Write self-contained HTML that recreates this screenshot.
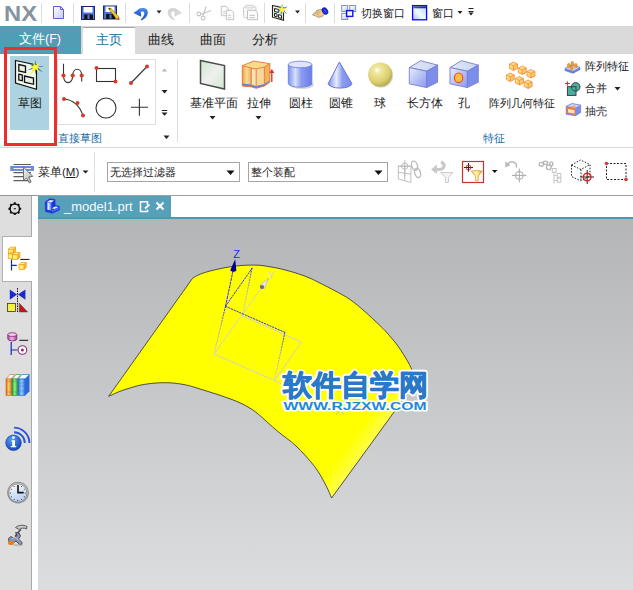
<!DOCTYPE html>
<html><head><meta charset="utf-8">
<style>
*{margin:0;padding:0;box-sizing:border-box}
html,body{width:633px;height:590px;overflow:hidden;background:#fff;font-family:"Liberation Sans",sans-serif;color:#222}
.a{position:absolute}
.t{position:absolute;white-space:nowrap;font-size:12px;line-height:12px}
svg{position:absolute;overflow:visible}
</style></head><body>
<!-- quick access bar -->
<div class="a" style="left:0;top:0;width:633px;height:26px;background:#fff"></div>
<div class="t" style="left:3.5px;top:3px;font-size:22px;line-height:22px;font-weight:bold;color:#8694a0;transform:scaleX(1.08);transform-origin:0 0">NX</div>
<div class="a" style="left:41px;top:3px;width:1px;height:20px;background:#dcdcdc"></div>
<div class="a" style="left:73px;top:3px;width:1px;height:20px;background:#dcdcdc"></div>
<div class="a" style="left:125px;top:3px;width:1px;height:20px;background:#dcdcdc"></div>
<div class="a" style="left:189px;top:3px;width:1px;height:20px;background:#dcdcdc"></div>
<div class="a" style="left:264px;top:3px;width:1px;height:20px;background:#dcdcdc"></div>
<div class="a" style="left:305px;top:3px;width:1px;height:20px;background:#dcdcdc"></div>
<div class="a" style="left:334px;top:3px;width:1px;height:20px;background:#dcdcdc"></div>


<!-- QA icons -->
<svg style="left:0;top:0" width="633" height="26">
 <defs>
  <linearGradient id="gdoc" x1="0" y1="0" x2="1" y2="1"><stop offset="0" stop-color="#ffffff"/><stop offset="1" stop-color="#c8c8f4"/></linearGradient>
  <linearGradient id="gsave" x1="0" y1="0" x2="1" y2="1"><stop offset="0" stop-color="#3a5ad0"/><stop offset="1" stop-color="#6d8ee8"/></linearGradient>
  <linearGradient id="gwin" x1="0" y1="0" x2="1" y2="1"><stop offset="0" stop-color="#ffffff"/><stop offset="0.5" stop-color="#e4ecfa"/><stop offset="1" stop-color="#a6bff0"/></linearGradient>
 </defs>
 <!-- new doc -->
 <path d="M53.5 6.5 H60.5 L63.5 9.5 V18.5 H53.5 Z" fill="url(#gdoc)" stroke="#5b5bdc" stroke-width="1"/>
 <path d="M60.5 6.5 V9.5 H63.5" fill="none" stroke="#5b5bdc" stroke-width="1"/>
 <!-- save -->
 <rect x="81.5" y="6.5" width="13" height="13" fill="url(#gsave)" stroke="#1a2570" stroke-width="1"/>
 <rect x="83.5" y="7" width="9" height="5.5" fill="#fff"/>
 <rect x="84.2" y="14.5" width="8.8" height="5" fill="#111"/>
 <rect x="87.5" y="15" width="2" height="4" fill="#5a7ae0"/>
 <!-- save as -->
 <rect x="103.5" y="6" width="13" height="13" fill="url(#gsave)" stroke="#1a2570" stroke-width="1"/>
 <rect x="105.5" y="6.5" width="9" height="5.5" fill="#fff"/>
 <rect x="106.2" y="14" width="8.8" height="5" fill="#111"/>
 <rect x="109.5" y="14.5" width="2" height="4" fill="#5a7ae0"/>
 <path d="M108.5 8.5 L110.5 8 L119 17 L117 19.5 Z" fill="#f4d020" stroke="#8a6a10" stroke-width="0.6"/>
 <path d="M117 19.5 L119 17 L119.5 20 Z" fill="#e02020"/>
 <path d="M108.5 8.5 L110.5 8 L110 10 Z" fill="#222"/>
 <!-- undo -->
 <defs><linearGradient id="gund" x1="0" y1="0" x2="0" y2="1"><stop offset="0" stop-color="#4a8af0"/><stop offset="1" stop-color="#1a50c8"/></linearGradient></defs>
 <path d="M133.5 13 L140.5 7.8 L141.2 16.8 Z" fill="url(#gund)"/>
 <path d="M139 9.2 C144 6.5 148.5 9 147.8 13.5 C147.2 16.8 144.5 19 141.2 20.5 L140.8 19.6 C143.3 17 144.8 14.5 144.2 12.8 C143.5 11 141.5 11.2 139.8 12.5 Z" fill="url(#gund)"/>
 <path d="M156.5 10.5 H161.5 L159 13.5 Z" fill="#222"/>
 <!-- redo gray -->
 <g transform="translate(315.5,0) scale(-1,1)">
 <path d="M133.5 13 L140.5 7.8 L141.2 16.8 Z" fill="#d6d6d6"/>
 <path d="M139 9.2 C144 6.5 148.5 9 147.8 13.5 C147.2 16.8 144.5 19 141.2 20.5 L140.8 19.6 C143.3 17 144.8 14.5 144.2 12.8 C143.5 11 141.5 11.2 139.8 12.5 Z" fill="#d6d6d6"/>
 </g>
 <!-- cut gray -->
 <g stroke="#c4c4c4" fill="none" stroke-width="1.1">
  <path d="M206.2 6.5 L203 15.5 M211 10.5 L201 14.2"/>
  <circle cx="198.8" cy="14" r="1.9"/><circle cx="203.2" cy="18" r="1.9"/>
 </g>
 <!-- copy gray -->
 <g stroke="#c4c4c4" fill="#fbfbfb" stroke-width="1">
  <path d="M221.3 6.3 H226 L228.3 8.6 V15.7 H221.3 Z"/>
  <path d="M226.3 10.3 H231.5 L233.7 12.5 V19.7 H226.3 Z"/>
  <path d="M223 11.4 H225.5 M223 13.3 H225.5 M227.8 15.4 H231 M227.8 17.6 H231" stroke-width="0.8"/>
 </g>
 <!-- paste gray -->
 <g stroke="#cccccc" fill="#f8f8f8" stroke-width="1">
  <rect x="243.5" y="6.8" width="12.5" height="10.8" rx="1"/>
  <rect x="245.5" y="5.3" width="8" height="2.6" rx="1.2"/>
 </g>
 <g stroke="#c0c0c0" fill="#fbfbfb" stroke-width="1">
  <path d="M247.5 10.3 H255 L257.6 12.8 V19.7 H247.5 Z"/>
  <path d="M249.5 15.4 H255 M249.5 17.6 H255" stroke-width="0.9"/>
 </g>
 <!-- sketch w star -->
 <path d="M272.5 5.5 L283.5 8 L283.5 20.3 L272.5 17.2 Z" fill="#eef6e8" stroke="#222" stroke-width="1.1"/>
 <path d="M274.5 8.5 L278.5 9.5 L278.5 12.5 L274.5 11.5 Z M274.5 13.2 L277 14 L277 17 L274.5 16.2 Z M278.5 14.5 L281.5 15.5 L281.5 18.5 L278.5 17.5 Z" fill="none" stroke="#222" stroke-width="1"/>
 <g transform="translate(282,9.5)">
  <path d="M0 -6 L1 -1.8 L5.5 -3 L2 0.5 L5 4.5 L0.5 2 L-1 6.5 L-1.5 2 L-5.5 2.5 L-2 -0.5 L-4.5 -4.5 L-0.8 -2 Z" fill="#4a88c8"/>
  <path d="M0 -4.5 L1.2 -1.2 L4.5 -1.5 L1.8 0.8 L3 4 L0 2 L-2.8 3.5 L-1.8 0.5 L-4.5 -1.5 L-1.2 -1.2 Z" fill="#fff43a"/>
 </g>
 <path d="M295 10.5 H300 L297.5 13.5 Z" fill="#222"/>
 <!-- hand -->
 <path d="M312.5 14.8 C313 13.5 314.5 12.8 316 12.3 L316.5 10.5 C318 9.8 320.5 9.5 322.5 9.2 L324.5 11.5 C324.8 13.5 324 15.5 322 16.5 C320 17.3 318 17.5 316.5 16.8 L315.5 15.8 C314.5 15.6 313.3 15.5 312.5 14.8 Z" fill="#ecc98c" stroke="#8a7050" stroke-width="0.6"/>
 <path d="M316.5 12.5 L319.5 12 M316.5 14.5 L319 14" stroke="#a08060" stroke-width="0.5"/>
 <ellipse cx="325" cy="11" rx="2.6" ry="3.6" transform="rotate(-35 325 11)" fill="#1828d8" stroke="#0a10a0" stroke-width="0.6"/>
 <path d="M324.3 9.5 L326.3 12.5" stroke="#7080ff" stroke-width="0.8"/>
 <!-- switch window -->
 <g fill="url(#gwin)" stroke="#8a92a8" stroke-width="1">
  <rect x="341.7" y="5.5" width="6" height="6"/>
  <rect x="349.7" y="5.5" width="6" height="6"/>
  <rect x="341.7" y="13.5" width="6" height="6"/>
 </g>
 <rect x="346.6" y="10.6" width="6.2" height="5.8" fill="#f4f8ff" stroke="#0a14f0" stroke-width="1.4"/>
 <!-- window -->
 <linearGradient id="gwin2" x1="0" y1="1" x2="1" y2="0"><stop offset="0" stop-color="#b0c0f4"/><stop offset="0.45" stop-color="#f0fbff"/><stop offset="1" stop-color="#b8d0f0"/></linearGradient>
 <linearGradient id="gwbar" x1="0" y1="0" x2="1" y2="0"><stop offset="0" stop-color="#3a5ac8"/><stop offset="1" stop-color="#1a3060"/></linearGradient>
 <rect x="412.6" y="5.6" width="14" height="14.2" fill="url(#gwin2)" stroke="#0808ff" stroke-width="1.3"/>
 <rect x="413.3" y="6.3" width="12.6" height="2" fill="url(#gwbar)"/>
 <path d="M457.5 11 H462.5 L460 14 Z" fill="#222"/>
 <path d="M468.5 8.5 H473.5 M468.5 11.5 H473.5" stroke="#222" stroke-width="1"/>
 <path d="M468.5 12.5 H473.5 L471 15.5 Z" fill="#222"/>
</svg>
<div class="t" style="left:361px;top:7px;font-size:11px;line-height:12px">切换窗口</div>
<div class="t" style="left:432px;top:7px;font-size:11px;line-height:12px">窗口</div>

<!-- tab row -->
<div class="a" style="left:0;top:26px;width:633px;height:28px;background:#dadada"></div>
<div class="a" style="left:0;top:26px;width:81px;height:28px;background:#519db6"></div>
<div class="a" style="left:83px;top:27px;width:52px;height:27px;background:#fff;border-top:1px solid #a4a4a4"></div>
<div class="t" style="left:19px;top:33px;font-size:12.5px;line-height:13px;color:#fff">文件(F)</div>
<div class="t" style="left:96px;top:33px;font-size:13px;line-height:13px;color:#156e96">主页</div>
<div class="t" style="left:148px;top:33px;font-size:13px;line-height:13px;color:#222">曲线</div>
<div class="t" style="left:200px;top:33px;font-size:13px;line-height:13px;color:#222">曲面</div>
<div class="t" style="left:252px;top:33px;font-size:13px;line-height:13px;color:#222">分析</div>

<!-- ribbon -->
<div class="a" style="left:0;top:147px;width:633px;height:1px;background:#d8d8d8"></div>
<div class="a" style="left:10px;top:56px;width:39px;height:74px;background:#aed3e0"></div>
<div class="a" style="left:4px;top:47px;width:53px;height:99px;border:3px solid #ee2e2e"></div>
<div class="t" style="left:18px;top:98px;font-size:11.5px;line-height:11px">草图</div>
<div class="a" style="left:57px;top:59px;width:99px;height:66px;border:1px solid #dddddd"></div>
<div class="t" style="left:58px;top:133px;font-size:11px;line-height:11px;color:#1a6ea8">直接草图</div>
<div class="a" style="left:177px;top:59px;width:1px;height:83px;background:#dcdcdc"></div>
<div class="t" style="left:190px;top:98px;font-size:11.5px;line-height:11px">基准平面</div>
<div class="t" style="left:247px;top:98px;font-size:11.5px;line-height:11px">拉伸</div>
<div class="t" style="left:289px;top:98px;font-size:11.5px;line-height:11px">圆柱</div>
<div class="t" style="left:329px;top:98px;font-size:11.5px;line-height:11px">圆锥</div>
<div class="t" style="left:374px;top:98px;font-size:11.5px;line-height:11px">球</div>
<div class="t" style="left:407px;top:98px;font-size:11.5px;line-height:11px">长方体</div>
<div class="t" style="left:458px;top:98px;font-size:11.5px;line-height:11px">孔</div>
<div class="t" style="left:489px;top:98px;font-size:11px;line-height:11px">阵列几何特征</div>
<div class="t" style="left:483px;top:133px;font-size:11px;line-height:11px;color:#1a6ea8">特征</div>
<div class="t" style="left:585px;top:61px;font-size:11px;line-height:11px">阵列特征</div>
<div class="t" style="left:585px;top:83px;font-size:11px;line-height:11px">合并</div>
<div class="t" style="left:585px;top:106px;font-size:11px;line-height:11px">抽壳</div>


<!-- ribbon icons -->
<svg style="left:0;top:0" width="633" height="150">
 <defs>
  <linearGradient id="gdp" x1="0" y1="0" x2="1" y2="1"><stop offset="0" stop-color="#cfe6cf"/><stop offset="0.5" stop-color="#f0f0f0"/><stop offset="1" stop-color="#cfe8cf"/></linearGradient>
  <linearGradient id="gcyl" x1="0" y1="0" x2="1" y2="0"><stop offset="0" stop-color="#7a90f0"/><stop offset="0.3" stop-color="#d8e2fa"/><stop offset="0.55" stop-color="#8a9cf0"/><stop offset="1" stop-color="#6a7ce8"/></linearGradient>
  <linearGradient id="gcone" x1="0" y1="0" x2="1" y2="0"><stop offset="0" stop-color="#7a90f0"/><stop offset="0.35" stop-color="#e8ecfa"/><stop offset="0.6" stop-color="#8a9cf0"/><stop offset="1" stop-color="#7a8ce8"/></linearGradient>
  <radialGradient id="gsph" cx="0.38" cy="0.32" r="0.7"><stop offset="0" stop-color="#ffffff"/><stop offset="0.2" stop-color="#f0e8a0"/><stop offset="0.7" stop-color="#dccf70"/><stop offset="1" stop-color="#b8a850"/></radialGradient>
  <linearGradient id="gbf" x1="0" y1="0" x2="1" y2="1"><stop offset="0" stop-color="#e8eefa"/><stop offset="1" stop-color="#8898ee"/></linearGradient>
  <linearGradient id="gbt" x1="0" y1="0" x2="1" y2="0"><stop offset="0" stop-color="#e0e8f4"/><stop offset="1" stop-color="#c8d8f0"/></linearGradient>
  <linearGradient id="gext" x1="0" y1="0" x2="1" y2="0"><stop offset="0" stop-color="#f0a030"/><stop offset="0.5" stop-color="#f6dca0"/><stop offset="1" stop-color="#f0b050"/></linearGradient>
  <linearGradient id="gcube" x1="0" y1="0" x2="1" y2="1"><stop offset="0" stop-color="#fff0a0"/><stop offset="1" stop-color="#f8b848"/></linearGradient>
  <g id="cb"><path d="M-4 -2 L0 -4 L4 -2 L4 2.5 L0 4.5 L-4 2.5 Z" fill="url(#gcube)"/><path d="M-4 -2 L0 0 L4 -2 M0 0 V4.5" fill="none"/></g>
 </defs>
 <!-- sketch -->
 <path d="M15.5 60.5 L36.5 65 L36.5 89.3 L15.5 83 Z" fill="#f2f8ee" stroke="#111" stroke-width="1.2"/>
 <path d="M18.8 64.5 L25.5 66 L25.5 72.5 L18.8 71 Z" fill="#e8f0e4" stroke="#111" stroke-width="1.3"/>
 <path d="M18.8 74.2 L22.3 75 L22.3 80.8 L18.8 80 Z" fill="#e8f0e4" stroke="#111" stroke-width="1.3"/>
 <path d="M24.5 76 L33.5 78 L33.5 84.3 L24.5 82.2 Z" fill="#e8f0e4" stroke="#111" stroke-width="1.3"/>
 <g>
  <path d="M36.50 67.19 L35.35 59.80 L34.30 67.21 Z" fill="#2a70a8"/>
  <path d="M35.50 68.30 L44.00 66.40 L35.30 66.10 Z" fill="#2a70a8"/>
  <path d="M34.77 68.10 L43.20 72.60 L36.03 66.30 Z" fill="#2a70a8"/>
  <path d="M34.30 67.26 L35.80 74.60 L36.50 67.14 Z" fill="#2a70a8"/>
  <path d="M35.01 66.17 L27.00 70.40 L35.79 68.23 Z" fill="#2a70a8"/>
  <path d="M35.98 66.27 L29.00 63.20 L34.82 68.13 Z" fill="#2a70a8"/>
  <path d="M34.13 66.40 L30.00 75.80 L36.67 68.00 Z" fill="#fff020"/>
  <path d="M36.50 68.21 L39.90 62.30 L34.30 66.19 Z" fill="#fff020"/>
  <path d="M35.65 65.72 L29.50 66.20 L35.15 68.68 Z" fill="#fff020"/>
  <path d="M35.40 68.70 L41.60 67.20 L35.40 65.70 Z" fill="#fff020"/>
  <path d="M36.76 66.57 L33.00 62.00 L34.04 67.83 Z" fill="#fff020"/>
  <path d="M34.21 68.12 L39.50 72.50 L36.59 66.28 Z" fill="#fff020"/>
  <path d="M34.59 65.93 L31.00 70.00 L36.21 68.47 Z" fill="#fff020"/>
  <circle cx="35.4" cy="67.2" r="2.2" fill="#fff43a"/>
 </g>
 <!-- gallery icons -->
 <g fill="none" stroke="#333" stroke-width="1.1">
  <path d="M63.5 63.8 V75.6 C63.5 84.9 72.7 84.9 72.7 75.6 C72.7 67.2 81.7 67.2 81.7 75.6 V81.6"/>
  <rect x="96.5" y="68.5" width="19" height="13"/>
  <path d="M131 83 L147 66.5"/>
  <path d="M64 99 C72 99.5 80 105 83 116"/>
  <circle cx="106" cy="108" r="10"/>
  <path d="M131 107.3 H148 M139.4 98.7 V115.8"/>
 </g>
 <g fill="#d83a2a">
  <circle cx="63.5" cy="75.6" r="2.1"/><circle cx="72.7" cy="75.6" r="2.1"/><circle cx="81.7" cy="75.6" r="2.1"/>
  <circle cx="96.5" cy="68" r="2"/><circle cx="115.5" cy="81.5" r="2"/>
  <circle cx="131" cy="83" r="2"/><circle cx="147" cy="66.5" r="2"/>
  <circle cx="64" cy="99" r="2"/><circle cx="77.5" cy="103" r="2"/><circle cx="83" cy="115.5" r="2"/>
 </g>
 <path d="M161.8 71.5 H167.2 L164.5 68.5 Z" fill="#b4b4b4"/>
 <path d="M161.5 90 H167.5 L164.5 93.5 Z" fill="#222"/>
 <path d="M161.8 110.5 H167.2" stroke="#222" stroke-width="1"/><path d="M161.5 112.5 H167.5 L164.5 115.8 Z" fill="#222"/>
 <path d="M163.5 135.5 H169.5 L166.5 139 Z" fill="#222"/>
 <!-- datum plane -->
 <path d="M200.5 60.5 L224.5 65.5 L224.5 89 L200.5 83.5 Z" fill="url(#gdp)" stroke="#4a4a4a" stroke-width="1.5"/>
 <path d="M209.5 116 H215.5 L212.5 119.5 Z" fill="#222"/>
 <!-- extrude -->
 <path d="M264.4 67 L269.9 63.6 L269.9 82 L264.4 86 Z" fill="#f2b458"/>
 <path d="M256.2 69 L264.4 67 L264.4 86 L256.2 88 Z" fill="#f6d69a"/>
 <path d="M251.2 68 L256.2 69 L256.2 88 L251.2 86.5 Z" fill="#f8e4b0"/>
 <path d="M242.3 65.7 L251.2 68 L251.2 86.5 L242.3 86 Z" fill="url(#gext)"/>
 <path d="M242.3 65.7 L253.7 61.1 L269.9 63.6 L264.4 67 L256.2 69 L251.2 68 Z" fill="#f8dc88"/>
 <path d="M242.3 83.5 L251.2 84.5 L256.2 86 L264.4 84 L269.9 80.5 L269.9 82 L264.4 86 L256.2 88.3 L251.2 86.8 L242.3 86 Z" fill="#5a86e0"/>
 <path d="M242.3 65.7 L253.7 61.1 L269.9 63.6 V82 L264.4 86 L256.2 88.3 L251.2 86.8 L242.3 86 Z M242.3 65.7 L251.2 68 L256.2 69 L264.4 67 L269.9 63.6 M251.2 68 V86.8 M256.2 69 V88.3 M264.4 67 V86" fill="none" stroke="#e8703a" stroke-width="0.9"/>
 <path d="M271.8 82 V72" stroke="#d83030" stroke-width="1.3"/>
 <path d="M269.3 73 L271.8 69 L274.3 73 Z" fill="#d83030"/>
 <path d="M255.5 116 H261.5 L258.5 119.5 Z" fill="#222"/>
 <!-- cylinder -->
 <ellipse cx="302" cy="85" rx="12" ry="4" fill="#c8c8c8" opacity="0.7"/>
 <path d="M288.3 64.5 V83.5 A11.8 3.7 0 0 0 311.9 83.5 V64.5 Z" fill="url(#gcyl)" stroke="#6a7ad8" stroke-width="0.8"/>
 <ellipse cx="300.1" cy="64.5" rx="11.8" ry="3.3" fill="#dfe6fb" stroke="#6a7ad8" stroke-width="0.8"/>
 <!-- cone -->
 <path d="M339.4 62 L328.2 83.5 A11.8 4.6 0 0 0 351.8 83.5 Z" fill="url(#gcone)" stroke="#5a6ad8" stroke-width="0.9"/>
 <!-- sphere -->
 <circle cx="381" cy="75.5" r="12.2" fill="#c8c8c8" opacity="0.6"/>
 <circle cx="380.2" cy="74.6" r="12.1" fill="url(#gsph)"/>
 <!-- box -->
 <path d="M409.3 67.6 L420.7 60.7 L437.6 65.1 L426.7 71.2 Z" fill="url(#gbt)" stroke="#7a7ad0" stroke-width="0.9"/>
 <path d="M409.3 67.6 L426.7 71.2 L426.7 87.6 L409.3 83.8 Z" fill="url(#gbf)" stroke="#7a7ad0" stroke-width="0.9"/>
 <path d="M426.7 71.2 L437.6 65.1 L437.6 82.2 L426.7 87.6 Z" fill="#7c8eec" stroke="#7a7ad0" stroke-width="0.9"/>
 <!-- hole -->
 <path d="M450 67.6 L461.4 60.7 L478.3 65.1 L467.4 71.2 Z" fill="url(#gbt)" stroke="#7a7ad0" stroke-width="0.9"/>
 <path d="M450 67.6 L467.4 71.2 L467.4 87.6 L450 83.8 Z" fill="url(#gbf)" stroke="#7a7ad0" stroke-width="0.9"/>
 <path d="M467.4 71.2 L478.3 65.1 L478.3 82.2 L467.4 87.6 Z" fill="#7c8eec" stroke="#7a7ad0" stroke-width="0.9"/>
 <ellipse cx="458.6" cy="77.8" rx="4.2" ry="4.8" fill="#f8c040" stroke="#e84a20" stroke-width="1.1"/>
 <!-- pattern geometry -->
 <g stroke="#f08030" stroke-width="0.7">
  <use href="#cb" x="513.5" y="66"/><use href="#cb" x="522.3" y="70"/><use href="#cb" x="531" y="73.5"/>
  <use href="#cb" x="510.3" y="77"/><use href="#cb" x="519.4" y="80.5"/><use href="#cb" x="528.1" y="84"/>
 </g>
 <!-- small icons -->
 <path d="M565 68.5 L572 64.5 L580 67.5 L580 69.5 L573 73.3 L565 70.5 Z" fill="#6a80e0" stroke="#5060c0" stroke-width="0.6"/>
 <path d="M565 68.5 L572 64.5 L580 67.5 L573 71.3 Z" fill="#c8d4f8" stroke="#7080d0" stroke-width="0.5"/>
 <g fill="#f0a030" stroke="#c06a10" stroke-width="0.4">
  <rect x="567.5" y="63.5" width="2.6" height="4.2" rx="1.2"/><rect x="571" y="61.5" width="2.6" height="4.2" rx="1.2"/>
  <rect x="574.5" y="63.5" width="2.6" height="4.2" rx="1.2"/><rect x="570.5" y="65.8" width="2.6" height="4.2" rx="1.2"/>
 </g>
 <circle cx="575.7" cy="86.9" r="4.3" fill="#48b0a0" stroke="#333" stroke-width="0.9"/>
 <rect x="567.4" y="86.7" width="8.6" height="8.7" fill="#48b0a0" stroke="#333" stroke-width="0.9"/>
 <path d="M575.7 91.2 A4.3 4.3 0 0 1 571.4 86.9" fill="none" stroke="#333" stroke-width="0.8"/>
 <path d="M565 83.5 H569.8 M567.4 81.3 V85.7" stroke="#e02020" stroke-width="1"/>
 <path d="M614.5 87 H620.5 L617.5 90.5 Z" fill="#222"/>
 <path d="M566.2 106.2 L572 103.5 L580.6 105 L580.6 112.5 L575.5 115.8 L566.2 114.3 Z" fill="#7a8cf0" stroke="#5a6ac8" stroke-width="0.6"/>
 <path d="M566.8 106.8 L575.3 108 L575.3 115 L566.8 113.6 Z" fill="#f07a30"/>
 <path d="M568 109 L574.5 110 L574.5 113.5 L568 112.5 Z" fill="#fce0b8"/>
 <path d="M567 106.3 L572 104 L580 105.3 L575.3 107.8 Z" fill="#c8d4f8"/>
 <path d="M570 107 L574 105.5 L576 106 L575 108 Z" fill="#f8a860"/>
</svg>

<!-- toolbar -->
<div class="a" style="left:0;top:195px;width:633px;height:1px;background:#9aa0a4"></div>
<div class="a" style="left:94px;top:152px;width:1px;height:40px;background:#e0e0e0"></div>
<div class="t" style="left:38px;top:167px;font-size:11.5px;line-height:11px">菜单(<u>M</u>)</div>
<div class="a" style="left:107px;top:162px;width:133px;height:20px;border:1px solid #a5a5a5;background:#fff"></div>
<div class="t" style="left:110px;top:167px;font-size:11px;line-height:11px">无选择过滤器</div>
<div class="a" style="left:248px;top:162px;width:140px;height:20px;border:1px solid #a5a5a5;background:#fff"></div>
<div class="t" style="left:251px;top:167px;font-size:11px;line-height:11px">整个装配</div>


<!-- toolbar icons -->
<svg style="left:0;top:150px" width="633" height="45" viewBox="0 150 633 45">
 <defs>
  <linearGradient id="gfun" x1="0" y1="0" x2="1" y2="0"><stop offset="0" stop-color="#f8d870"/><stop offset="0.5" stop-color="#fff0b0"/><stop offset="1" stop-color="#e0a830"/></linearGradient>
 </defs>
 <!-- menu -->
 <path d="M13.5 164.5 H31 M13.5 172.6 H31 M13.5 176.6 H31 M13.5 180.6 H31" stroke="#5e5e5e" stroke-width="1.1"/>
 <rect x="10.2" y="166" width="23.8" height="4.9" fill="#6a8ae0"/>
 <path d="M13.5 168.5 H31" stroke="#f0f4ff" stroke-width="1"/>
 <defs><linearGradient id="gcur" x1="0" y1="0" x2="1" y2="1"><stop offset="0" stop-color="#f4f4f4"/><stop offset="1" stop-color="#b0b0b0"/></linearGradient></defs>
 <path d="M23.5 167.2 L23.5 180.5 L26.5 178 L29.3 183 L31.2 182 L28.6 177 L32.8 176.3 Z" fill="url(#gcur)" stroke="#666" stroke-width="0.9" stroke-linejoin="round"/>
 <path d="M82.5 170.5 H88.5 L85.5 173.5 Z" fill="#222"/>
 <path d="M226.5 170.5 H234.5 L230.5 175 Z" fill="#111"/>
 <path d="M374.5 170.5 H382.5 L378.5 175 Z" fill="#111"/>
 <!-- icon1 gray -->
 <g stroke="#b8b8b8" fill="none" stroke-width="0.9">
  <path d="M398.3 166.2 H410.9 V182.5 L398.3 179 Z M398.3 172.4 L410.9 174 M404.8 166.2 V180.8"/>
  <path d="M404.8 160.2 V176.5 M398 166.2 H410.5"/>
  <circle cx="404.8" cy="166.2" r="3.1"/>
  <ellipse cx="414.6" cy="165.8" rx="2.9" ry="4.8" transform="rotate(-18 414.6 165.8)" stroke-width="1.3"/>
  <ellipse cx="417.6" cy="172.9" rx="2.9" ry="4.8" transform="rotate(-18 417.6 172.9)" stroke-width="1.3"/>
 </g>
 <!-- icon2 gray -->
 <path d="M441 162 C446 164 445 170 438 169.5 L436 169.5" fill="none" stroke="#c8c8c8" stroke-width="3"/>
 <path d="M431 169.5 L437 164.5 L437 174 Z" fill="#c8c8c8"/>
 <path d="M440.5 172.5 H453 L448.5 177.5 V182.5 H445.5 V177.5 Z" fill="#f2f2f2" stroke="#c8c8c8" stroke-width="0.9"/>
 <!-- icon3 -->
 <rect x="462.5" y="161.5" width="21" height="21" fill="#fff" stroke="#d03030" stroke-width="1.2"/>
 <path d="M468.5 163 V171.8 M464 167.5 H473" stroke="#222" stroke-width="1.1"/>
 <circle cx="468.5" cy="167.5" r="2.5" fill="none" stroke="#d02828" stroke-width="0.9"/>
 <path d="M471.2 171.2 Q476.7 169.5 482.2 171.2 L478.3 176 V180.6 Q476.8 181.2 475.3 180.6 V176 Z" fill="url(#gfun)" stroke="#d09a20" stroke-width="0.7"/>
 <path d="M492 170 H497.5 L494.7 173 Z" fill="#111"/>
 <!-- icon4 gray -->
 <path d="M507 165 C510 160 517 161 516.5 167.5" fill="none" stroke="#b8b8b8" stroke-width="1.5"/>
 <path d="M505 161.5 L505.5 167.5 L510.5 165 Z" fill="#b8b8b8"/>
 <g stroke="#a8a8a8" stroke-width="1" fill="none"><circle cx="519.3" cy="175.4" r="4"/><path d="M512 175.4 H526.5 M519.3 168.5 V182.5"/></g>
 <!-- icon5 gray -->
 <g stroke="#b4b4b4" fill="none" stroke-width="1.3">
  <ellipse cx="541.3" cy="164.3" rx="2.1" ry="1.9"/><ellipse cx="545.5" cy="162.8" rx="2.2" ry="1.6"/>
  <circle cx="548.8" cy="167.3" r="2.4"/><ellipse cx="551.3" cy="163.8" rx="1.6" ry="2"/>
 </g>
 <g stroke="#c4c4c4" fill="none" stroke-width="1">
  <rect x="552.3" y="168.5" width="3.8" height="3.8"/><rect x="557.3" y="173.5" width="3.5" height="3.8"/><rect x="557.3" y="178" width="3.5" height="4.2"/>
  <path d="M554 172.5 V183.6 M554 175.3 H557 M554 180.5 H557"/>
 </g>
 <!-- icon6 dotted cube -->
 <g stroke="#222" fill="none" stroke-width="1" stroke-dasharray="1.5 1.5">
  <path d="M571.5 165 L580.5 160 L590 164.5 L590 176 L581 181 L571.5 176.5 Z M571.5 165 L581 169.5 L590 164.5 M581 169.5 V181"/>
 </g>
 <g stroke="#222" stroke-width="1"><path d="M580 177 H594 M587.2 170 V184"/></g>
 <circle cx="587.2" cy="177" r="3.8" fill="none" stroke="#d82020" stroke-width="1.4"/>
 <!-- icon7 dashed rect -->
 <rect x="606.5" y="163.5" width="19.5" height="16" fill="none" stroke="#222" stroke-width="1" stroke-dasharray="2 1.5"/>
 <circle cx="606.5" cy="163.5" r="1.8" fill="#d83a3a"/><circle cx="626" cy="179.5" r="1.8" fill="#d83a3a"/>
</svg>

<!-- doc tab row -->
<div class="a" style="left:38px;top:196px;width:133px;height:23px;background:#57a0b9"></div>
<div class="a" style="left:38px;top:217px;width:595px;height:2px;background:#4b9ab5"></div>
<div class="t" style="left:64px;top:199.5px;font-size:13px;line-height:13px;color:#f4faff">_model1.prt</div>
<svg style="left:0;top:196px" width="200" height="23" viewBox="0 196 200 23">
 <defs><linearGradient id="gL" x1="0" y1="0" x2="1" y2="0"><stop offset="0" stop-color="#3050f0"/><stop offset="0.35" stop-color="#e8eeff"/><stop offset="1" stop-color="#5070f0"/></linearGradient></defs>
 <path d="M45.2 202 L49.8 198.8 L55 199.6 L55.2 205.6 L59.3 206.2 L59.3 210 L52.5 213.2 L45.5 211.5 Z" fill="#1838e0" stroke="#1a30d0" stroke-width="0.6" stroke-linejoin="round"/>
 <path d="M46.6 202.6 L51.4 203 L51.4 210.5 L46.6 209.8 Z" fill="url(#gL)"/>
 <path d="M46.6 202.3 L50 200 L54 200.6 L51.4 202.5 Z" fill="#dfe6ff"/>
 <path d="M51.6 208.2 L55.2 206.4 L58.6 206.9 L54.8 208.9 Z" fill="#e8eeff"/>
 <path d="M51.8 210 L58.5 207.6 L58.5 209.6 L52 212 Z" fill="#4a68f0"/>
 <path d="M147.5 205 V201.8 H140.5 V211.5 H147.5 V209.5" fill="none" stroke="#fff" stroke-width="1.5"/>
 <path d="M145 208.5 L149.5 204.5" stroke="#fff" stroke-width="1.8"/>
 <path d="M156.5 202.5 L163.5 209.5 M163.5 202.5 L156.5 209.5" stroke="#fff" stroke-width="2.1"/>
</svg>


<!-- left panel -->
<div class="a" style="left:0;top:195px;width:38px;height:1px;background:#8f969b"></div>
<div class="a" style="left:0;top:196px;width:32px;height:394px;background:#dedede;border-right:1px solid #a9a9a9"></div>
<div class="a" style="left:2px;top:236px;width:30px;height:46px;background:#fff;border:1px solid #b0b0b0;border-right:none"></div>

<!-- viewport -->
<div class="a" style="left:38px;top:219px;width:595px;height:371px;background:linear-gradient(#b4b5b7,#dcdddf)"></div>

<svg style="left:0;top:0" width="633" height="590">
 <defs>
  <linearGradient id="gsurf" gradientUnits="userSpaceOnUse" x1="380.4" y1="400.2" x2="394.9" y2="410.8"><stop offset="0" stop-color="#ffff00"/><stop offset="1" stop-color="#ffff48"/></linearGradient>
 </defs>
 <path d="M192.6 278.2 C193.8 277.5 197.1 275.4 200.0 274.2 C202.9 273.0 206.7 271.9 210.0 271.0 C213.3 270.1 216.7 269.4 220.0 268.7 C223.3 268.0 226.7 267.3 230.0 266.8 C233.3 266.3 236.7 265.9 240.0 265.6 C243.3 265.3 246.7 265.2 250.0 265.1 C253.3 265.1 256.7 265.0 260.0 265.3 C263.3 265.6 266.7 266.2 270.0 266.8 C273.3 267.4 276.7 267.9 280.0 268.7 C283.3 269.4 286.7 270.4 290.0 271.3 C293.3 272.2 296.7 273.2 300.0 274.4 C303.3 275.5 306.7 276.8 310.0 278.2 C313.3 279.6 315.8 281.0 320.0 283.1 C324.2 285.2 330.0 288.1 335.0 290.8 C340.0 293.5 345.0 296.0 350.0 299.5 C355.0 303.0 360.0 307.3 365.0 311.7 C370.0 316.1 375.9 321.7 380.0 325.6 C384.1 329.6 386.2 331.8 389.3 335.4 C392.4 339.0 395.5 342.6 398.6 347.0 C401.7 351.4 405.8 358.2 408.0 361.9 C410.2 365.6 410.2 366.3 411.7 369.4 C413.2 372.5 415.9 378.7 416.8 380.6 L394.9 410.8 L371.0 443.8 L331.6 498.0 C330.6 495.9 328.6 490.4 325.8 485.1 C323.0 479.9 319.6 473.0 314.6 466.5 C309.6 460.0 302.2 451.9 296.0 446.0 C289.8 440.1 283.5 436.2 277.3 431.0 C271.1 425.8 263.2 418.3 258.7 414.5 C254.1 410.7 253.1 410.1 250.0 408.2 C246.9 406.2 243.3 404.4 240.0 402.8 C236.7 401.2 233.3 400.1 230.0 398.8 C226.7 397.6 223.3 396.4 220.0 395.3 C216.7 394.2 213.3 393.2 210.0 392.1 C206.7 391.1 203.3 390.0 200.0 389.0 C196.7 388.0 193.3 386.8 190.0 385.9 C186.7 385.0 183.3 384.4 180.0 383.9 C176.7 383.4 173.3 383.0 170.0 382.8 C166.7 382.6 163.3 382.7 160.0 382.8 C156.7 382.9 153.3 383.2 150.0 383.6 C146.7 384.0 143.3 384.5 140.0 385.2 C136.7 385.9 133.3 387.0 130.0 388.0 C126.7 389.0 123.5 389.9 120.0 391.3 C116.5 392.7 110.6 395.5 108.7 396.3 L192.6 278.2 Z" fill="url(#gsurf)" stroke="#2c2c34" stroke-width="0.8" stroke-linejoin="miter"/>
 <!-- wireframe -->
 <defs>
  <linearGradient id="wg1" gradientUnits="userSpaceOnUse" x1="252" y1="268" x2="242.4" y2="316"><stop offset="0" stop-color="#3030f0"/><stop offset="0.5" stop-color="#b0b0e0"/><stop offset="1" stop-color="#d0d0d0"/></linearGradient>
  <linearGradient id="wg2" gradientUnits="userSpaceOnUse" x1="284.9" y1="332.4" x2="274.5" y2="380.5"><stop offset="0" stop-color="#2020f0"/><stop offset="0.45" stop-color="#a0a0e0"/><stop offset="1" stop-color="#d0d0d0"/></linearGradient>
  <linearGradient id="wg3" gradientUnits="userSpaceOnUse" x1="225.5" y1="306.3" x2="214" y2="354"><stop offset="0" stop-color="#2020f0"/><stop offset="0.45" stop-color="#a0a0e0"/><stop offset="1" stop-color="#d0d0d0"/></linearGradient>
 </defs>
 <g fill="none" stroke-width="1">
  <path d="M214 354 L262 287" stroke="#d2d2c8"/>
  <path d="M242.4 316 L301.4 342 L274.5 380.5 M214 354 L281.5 383.6" stroke="#d0d0c8"/>
  <path d="M252 268 L242.4 316" stroke="url(#wg1)" stroke-dasharray="2 0.8"/>
  <path d="M225.5 306.3 L214 354" stroke="url(#wg3)" stroke-dasharray="2 0.8"/>
  <path d="M284.9 332.4 L274.5 380.5" stroke="url(#wg2)" stroke-dasharray="2 0.8"/>
  <path d="M225.5 306.3 L233 271" stroke="#2a2aff" stroke-dasharray="3 0.7"/>
  <path d="M225.5 306.3 L252.3 267.9" stroke="#2a2aff" stroke-dasharray="2.2 0.8"/>
  <path d="M225.5 306.3 L284.9 332.4" stroke="#2a2aff" stroke-dasharray="2.2 0.8"/>
 </g>
 <path d="M235.2 259.3 L230.2 270.2 Q233 273 236.4 270.8 Z" fill="#000088"/>
 <path d="M268.7 278.3 L260 285 Q261 289.5 264.5 288.5 Z" fill="#e8e8e8" stroke="#a0a0a0" stroke-width="0.5"/>
 <ellipse cx="262" cy="287" rx="2.2" ry="2" fill="#707070"/>
 <text x="233.3" y="257.8" font-family="Liberation Sans" font-size="11" fill="#2828f0">Z</text>
 <text x="267.5" y="279" font-family="Liberation Sans" font-size="11" fill="#d8d8d8">Y</text>
 <path d="M336.5 414.5 L340 410 M344 414.5 L340.5 410" stroke="#b8b8b8" stroke-width="1"/>
 <path d="M324 402 L330 404.5 L325.5 406 Z" fill="#b0b0b0"/>
</svg>
<!-- watermark -->
<svg style="left:0;top:0" width="633" height="590">
 <text x="282.5" y="394.5" font-family="Liberation Sans, sans-serif" font-weight="bold" font-size="29" fill="#fff" stroke="#fff" stroke-width="4.5" stroke-linejoin="round" textLength="146" lengthAdjust="spacingAndGlyphs">软件自学网</text>
 <text x="282.5" y="394.5" font-family="Liberation Sans, sans-serif" font-weight="bold" font-size="29" fill="#2a78c8" stroke="#2a78c8" stroke-width="0.9" stroke-linejoin="round" textLength="146" lengthAdjust="spacingAndGlyphs">软件自学网</text>
 <text x="283.5" y="409.5" font-family="Liberation Sans, sans-serif" font-weight="bold" font-size="10.5" fill="#fff" stroke="#fff" stroke-width="3" stroke-linejoin="round" textLength="143" lengthAdjust="spacingAndGlyphs">WWW.RJZXW.COM</text>
 <text x="283.5" y="409.5" font-family="Liberation Sans, sans-serif" font-weight="bold" font-size="10.5" fill="#1e8ad8" textLength="143" lengthAdjust="spacingAndGlyphs">WWW.RJZXW.COM</text>
</svg>



<!-- left panel icons -->
<svg style="left:0;top:196px" width="38" height="394" viewBox="0 196 38 394">
 <defs>
  <linearGradient id="gyc" x1="0" y1="0" x2="1" y2="1"><stop offset="0" stop-color="#fff4a0"/><stop offset="1" stop-color="#f4b020"/></linearGradient>
  <linearGradient id="gclk" x1="0" y1="0" x2="0.3" y2="1"><stop offset="0" stop-color="#ffffff"/><stop offset="1" stop-color="#b8d0f0"/></linearGradient>
  <radialGradient id="ginf" cx="0.4" cy="0.3" r="0.7"><stop offset="0" stop-color="#5aa0f8"/><stop offset="1" stop-color="#1448b8"/></radialGradient>
 </defs>
 <!-- gear -->
 <g transform="translate(14.8,208.7)">
  <circle r="4.7" fill="none" stroke="#111" stroke-width="1.5"/>
  <rect x="-1" y="-0.6" width="2" height="1.2" fill="#222"/>
  <g stroke="#111" stroke-width="2"><path d="M0 -6.4 V-4.5 M0 4.5 V6.4 M-6.4 0 H-4.5 M4.5 0 H6.4 M-4.5 -4.5 L-3.3 -3.3 M4.5 4.5 L3.3 3.3 M-4.5 4.5 L-3.3 3.3 M4.5 -4.5 L3.3 -3.3"/></g>
 </g>
 <!-- assembly nav -->
 <g stroke="#f0a010" stroke-width="0.8" stroke-linejoin="round"><path d="M8.4 249.2 H13.6 V254.0 H8.4 Z" fill="#fff27a"/><path d="M8.4 249.2 L10.4 247.2 H15.6 L13.6 249.2 Z" fill="#fff8c0"/><path d="M13.6 249.2 L15.6 247.2 V252.0 L13.6 254.0 Z" fill="#f8c030"/></g>
 <g stroke="#f0a010" stroke-width="0.8" stroke-linejoin="round"><path d="M8.4 253.8 H12.7 V258.8 H8.4 Z" fill="#fff27a"/><path d="M8.4 253.8 L9.6 252.6 H13.9 L12.7 253.8 Z" fill="#fff8c0"/><path d="M12.7 253.8 L13.9 252.6 V257.6 L12.7 258.8 Z" fill="#f8c030"/></g>
 <g stroke="#f0a010" stroke-width="0.8" stroke-linejoin="round"><path d="M12.6 254.6 H17.8 V259.4 H12.6 Z" fill="#fff27a"/><path d="M12.6 254.6 L14.6 252.6 H19.8 L17.8 254.6 Z" fill="#fff8c0"/><path d="M17.8 254.6 L19.8 252.6 V257.4 L17.8 259.4 Z" fill="#f8c030"/></g>
 <g stroke="#f0a010" stroke-width="0.8" stroke-linejoin="round"><path d="M19.0 264.6 H24.2 V269.4 H19.0 Z" fill="#fff27a"/><path d="M19.0 264.6 L21.0 262.6 H26.2 L24.2 264.6 Z" fill="#fff8c0"/><path d="M24.2 264.6 L26.2 262.6 V267.4 L24.2 269.4 Z" fill="#f8c030"/></g>
 <path d="M11.5 259.5 V270.5 M11.5 265.3 H16.8" stroke="#1a2ab0" stroke-width="1.2" fill="none"/>
 <path d="M20.3 259.4 H29.5" stroke="#111" stroke-width="1"/>
 <!-- constraint -->
 <path d="M9.8 289.5 L17 294.6 L9.8 299.7 Z M25.4 289.5 L18 294.6 L25.4 299.7 Z" fill="#1a2ad0"/>
 <path d="M17.5 288 V313" stroke="#111" stroke-width="1" stroke-dasharray="1.5 1"/>
 <rect x="7.5" y="303.5" width="8" height="8" fill="#f8f040" stroke="#333" stroke-width="0.8"/>
 <path d="M19.3 303.3 L27.5 311.9 H19.3 Z" fill="#d01010" stroke="#444" stroke-width="0.6"/>
 <!-- part nav -->
 <defs><linearGradient id="gpc" x1="0" y1="0" x2="1" y2="0"><stop offset="0" stop-color="#b04aa0"/><stop offset="0.45" stop-color="#f0b8e8"/><stop offset="1" stop-color="#a03a90"/></linearGradient></defs>
 <path d="M7.8 334.6 V339 A4.5 1.9 0 0 0 16.8 339 V334.6 Z" fill="url(#gpc)" stroke="#7a2a6a" stroke-width="0.8"/>
 <ellipse cx="12.3" cy="334.6" rx="4.5" ry="1.9" fill="#f4c8ee" stroke="#7a2a6a" stroke-width="0.8"/>
 <path d="M19.3 340.3 H28.1" stroke="#111" stroke-width="1"/>
 <path d="M11.2 342 V355 M11.2 350 H17.5" stroke="#1a2ab0" stroke-width="1.2" fill="none"/>
 <circle cx="22.4" cy="350" r="4.3" fill="#fff" stroke="#8a2a7a" stroke-width="1.1"/>
 <circle cx="22.4" cy="350" r="1.5" fill="#8a2a7a"/>
 <!-- books -->
 <defs>
  <linearGradient id="bk1" x1="0" y1="0" x2="1" y2="0"><stop offset="0" stop-color="#e86a10"/><stop offset="0.5" stop-color="#f8d070"/><stop offset="1" stop-color="#e07010"/></linearGradient>
  <linearGradient id="bk2" x1="0" y1="0" x2="1" y2="0"><stop offset="0" stop-color="#20a020"/><stop offset="0.5" stop-color="#90f090"/><stop offset="1" stop-color="#20a830"/></linearGradient>
  <linearGradient id="bk3" x1="0" y1="0" x2="1" y2="0"><stop offset="0" stop-color="#2a70e0"/><stop offset="0.5" stop-color="#90c8ff"/><stop offset="1" stop-color="#3080e8"/></linearGradient>
 </defs>
 <path d="M6 379 L10 374.5 H15 L11 379 Z" fill="#fff" stroke="#e07020" stroke-width="0.7"/>
 <path d="M12 379 L16 374.5 H21 L17 379 Z" fill="#fff" stroke="#30a030" stroke-width="0.7"/>
 <path d="M18 379 L22 374.5 H29.5 L25 379 Z" fill="#fff" stroke="#3070d0" stroke-width="0.7"/>
 <rect x="6" y="379" width="5.5" height="16.5" fill="url(#bk1)" stroke="#d06010" stroke-width="0.6"/>
 <rect x="12" y="379" width="5.5" height="16.5" fill="url(#bk2)" stroke="#209020" stroke-width="0.6"/>
 <rect x="18" y="379" width="7" height="16.5" fill="url(#bk3)" stroke="#2060c0" stroke-width="0.6"/>
 <path d="M25 379 L29.5 374.5 V391.5 L25 395.5 Z" fill="#2a6ad8"/>
 <path d="M6.5 381.5 H11 M6.5 392 H11 M12.5 381.5 H17 M12.5 392 H17 M18.5 383 H24.5 M18.5 386 H24.5 M18.5 391 H24.5" stroke="#555" stroke-width="0.5" opacity="0.6"/>
 <!-- info -->
 <path d="M14 427.6 A15.4 15.4 0 0 1 29.4 443" fill="none" stroke="#2a58d0" stroke-width="1.9"/>
 <path d="M14 432.2 A10.8 10.8 0 0 1 24.8 443" fill="none" stroke="#2a58d0" stroke-width="1.9"/>
 <circle cx="13.5" cy="442.8" r="7.8" fill="url(#ginf)" stroke="#0a3aa0" stroke-width="0.6"/>
 <circle cx="13.5" cy="437.6" r="1.4" fill="#fff"/>
 <path d="M11.5 440.3 H15 V446 H16.3 V447.3 H10.8 V446 H12.2 V441.6 H11.5 Z" fill="#fff"/>
 <!-- clock -->
 <circle cx="18" cy="492.6" r="10.8" fill="#8a8a8a"/><circle cx="18" cy="492.6" r="10" fill="#c8c8c8"/>
 <circle cx="17.8" cy="493" r="9.2" fill="url(#gclk)" stroke="#606060" stroke-width="0.6"/>
 <g fill="#222"><circle cx="17.8" cy="485.5" r="0.6"/><circle cx="17.8" cy="500.5" r="0.6"/><circle cx="10.3" cy="493" r="0.6"/><circle cx="25.3" cy="493" r="0.6"/>
 <circle cx="21.5" cy="486.5" r="0.5"/><circle cx="24.3" cy="489.3" r="0.5"/><circle cx="24.3" cy="496.7" r="0.5"/><circle cx="21.5" cy="499.5" r="0.5"/><circle cx="14.1" cy="499.5" r="0.5"/><circle cx="11.3" cy="496.7" r="0.5"/><circle cx="11.3" cy="489.3" r="0.5"/><circle cx="14.1" cy="486.5" r="0.5"/></g>
 <path d="M18 485.2 V492.6 H23.7" stroke="#111" stroke-width="1.6" fill="none"/>
 <!-- tools -->
 <path d="M21 529 L15 536.5" stroke="#505050" stroke-width="1.6"/>
 <path d="M21.5 529.5 L20 528.3" stroke="#fff" stroke-width="0.8"/>
 <path d="M15.5 527.5 C18 525 23.5 524.5 27 526.5 L26.5 529 C24 527.5 21 528 19.5 529.5 Z" fill="#c8c8c8" stroke="#404040" stroke-width="0.8"/>
 <path d="M8.5 538.5 L11 536.5 L14 538.5 L17 535.5 L15.5 532.5 L19 533 L20.5 536 L18.5 539 L22 542.5 L21.5 544.5 L19.5 544.5 L16 541 L13 543 L9 542 Z" fill="#8c94b4" stroke="#303040" stroke-width="0.8"/>
 <path d="M12 538.5 L16 537.5 L19 540.5" stroke="#d8dcf0" stroke-width="0.8" fill="none"/>
 <ellipse cx="11" cy="543" rx="3" ry="2" fill="#f08010"/>
 <ellipse cx="18" cy="545" rx="5" ry="1.2" fill="#a0a0a0" opacity="0.5"/>
</svg>

</body></html>
